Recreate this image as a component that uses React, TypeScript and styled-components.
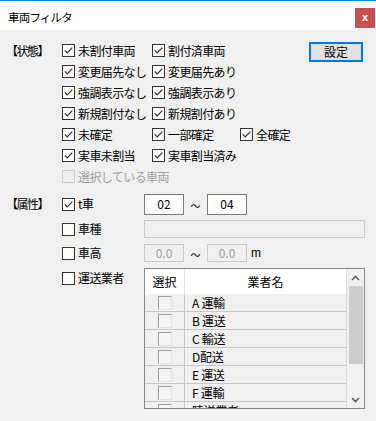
import { FC } from 'react';
import styled, { createGlobalStyle } from 'styled-components';

const GlobalStyle = createGlobalStyle`
  html, body {
    margin: 0;
    padding: 0;
    background: #f0f0f0;
  }
  body {
    font-family: "Noto Sans CJK JP", "Noto Sans", sans-serif;
    font-size: 12px;
    color: #000;
  }
`;

const stateRows: { label: string; checked: boolean; col: number; row: number; disabled?: boolean }[] = [
  { label: '未割付車両', checked: true, col: 2, row: 1 },
  { label: '割付済車両', checked: true, col: 3, row: 1 },
  { label: '変更届先なし', checked: true, col: 2, row: 2 },
  { label: '変更届先あり', checked: true, col: 3, row: 2 },
  { label: '強調表示なし', checked: true, col: 2, row: 3 },
  { label: '強調表示あり', checked: true, col: 3, row: 3 },
  { label: '新規割付なし', checked: true, col: 2, row: 4 },
  { label: '新規割付あり', checked: true, col: 3, row: 4 },
  { label: '未確定', checked: true, col: 2, row: 5 },
  { label: '一部確定', checked: true, col: 3, row: 5 },
  { label: '全確定', checked: true, col: 4, row: 5 },
  { label: '実車未割当', checked: true, col: 2, row: 6 },
  { label: '実車割当済み', checked: true, col: 3, row: 6 },
  { label: '選択している車両', checked: false, col: 2, row: 7, disabled: true },
];

const carriers = ['A 運輸', 'B 運送', 'C 輸送', 'D配送', 'E 運送', 'F 運輸', '陸送業者'];

const CheckMark = () => (
  <svg width="11" height="11" viewBox="0 0 11 11">
    <path d="M1.8 5.4 L4.2 7.9 L9.3 2.6" fill="none" stroke="#333" strokeWidth="1.3" />
  </svg>
);

const Check: FC<{ label: string; checked?: boolean; disabled?: boolean; col?: number; row?: number }> = ({
  label,
  checked,
  disabled,
  col,
  row,
}) => (
  <CheckLabel $col={col} $row={row} $disabled={disabled}>
    <Box $disabled={disabled}>{checked ? <CheckMark /> : null}</Box>
    <span>{label}</span>
  </CheckLabel>
);

const Chevron: FC<{ down?: boolean }> = ({ down }) => (
  <svg width="9" height="6" viewBox="0 0 9 6">
    <path
      d={down ? 'M1 1 L4.5 4.5 L8 1' : 'M1 5 L4.5 1.5 L8 5'}
      fill="none"
      stroke="#606060"
      strokeWidth="1.6"
    />
  </svg>
);

const App = () => {
  return (
    <Window>
      <GlobalStyle />
      <TitleBar>
        <Title>車両フィルタ</Title>
        <CloseButton>x</CloseButton>
      </TitleBar>
      <Body>
        <StateGrid>
          <SectionLabel>【状態】</SectionLabel>
          {stateRows.map((r) => (
            <Check key={r.label} {...r} />
          ))}
          <SetButton>設定</SetButton>
        </StateGrid>

        <AttrGrid>
          <SectionLabel>【属性】</SectionLabel>
          <Check label="t車" checked col={2} row={1} />
          <FieldRow>
            <Field $width={40}>02</Field>
            <Tilde>～</Tilde>
            <Field $width={40}>04</Field>
          </FieldRow>

          <Check label="車種" col={2} row={2} />
          <FieldRow>
            <Field $width={221} $disabled />
          </FieldRow>

          <Check label="車高" col={2} row={3} />
          <FieldRow>
            <Field $width={40} $disabled>
              0.0
            </Field>
            <Tilde>～</Tilde>
            <Field $width={40} $disabled>
              0.0
            </Field>
            <Unit>m</Unit>
          </FieldRow>

          <CarrierCheck>
            <Check label="運送業者" />
          </CarrierCheck>
          <ListBox>
            <ListArea>
              <HeadRow>
                <HeadCell $first>選択</HeadCell>
                <HeadCell>業者名</HeadCell>
              </HeadRow>
              {carriers.map((c) => (
                <ItemRow key={c}>
                  <SelectCell>
                    <SmallBox />
                  </SelectCell>
                  <NameCell>{c}</NameCell>
                </ItemRow>
              ))}
            </ListArea>
            <ScrollBar>
              <ScrollArrow>
                <Chevron />
              </ScrollArrow>
              <Track>
                <Thumb />
              </Track>
              <ScrollArrow>
                <Chevron down />
              </ScrollArrow>
            </ScrollBar>
          </ListBox>
        </AttrGrid>
      </Body>
    </Window>
  );
};

const Window = styled.div`
  width: 376px;
  height: 421px;
  overflow: hidden;
  background: #f0f0f0;
  display: flex;
  flex-direction: column;
`;

const TitleBar = styled.div`
  height: 29px;
  border-top: 1px solid #1883d7;
  background: #fff;
  display: flex;
  align-items: flex-start;
  justify-content: space-between;
  padding-left: 8px;
`;

const Title = styled.div`
  font-size: 11.5px;
  letter-spacing: -0.8px;
  line-height: 14px;
  margin-top: 9px;
`;

const CloseButton = styled.div`
  width: 20px;
  height: 20px;
  margin-top: 7px;
  margin-right: 1px;
  background: #c75050;
  color: #fff;
  font-family: 'Liberation Sans', sans-serif;
  font-weight: bold;
  font-size: 11px;
  line-height: 18px;
  text-align: center;
`;

const Body = styled.div`
  flex: 1;
  padding: 10px 0 0 8px;
`;

const StateGrid = styled.div`
  display: grid;
  grid-template-columns: 54px 90px 88px 1fr;
  grid-auto-rows: 21px;
`;

const SectionLabel = styled.div`
  grid-column: 1;
  grid-row: 1;
  align-self: center;
  letter-spacing: -1.5px;
  margin-left: -2px;
  line-height: 14px;
`;

const CheckLabel = styled.label<{ $col?: number; $row?: number; $disabled?: boolean }>`
  grid-column: ${({ $col }) => $col ?? 'auto'};
  grid-row: ${({ $row }) => $row ?? 'auto'};
  display: flex;
  align-items: center;
  gap: 3px;
  line-height: 14px;
  letter-spacing: -0.6px;
  white-space: nowrap;
  color: ${({ $disabled }) => ($disabled ? '#a0a0a0' : '#000')};
`;

const Box = styled.span<{ $disabled?: boolean }>`
  box-sizing: border-box;
  width: 13px;
  height: 13px;
  flex: none;
  display: flex;
  align-items: center;
  justify-content: center;
  background: ${({ $disabled }) => ($disabled ? '#f0f0f0' : '#fff')};
  border: 1px solid ${({ $disabled }) => ($disabled ? '#cccccc' : '#333')};
`;

const SetButton = styled.div`
  grid-column: 4;
  grid-row: 1;
  justify-self: end;
  align-self: start;
  margin: 2px 13px 0 0;
  box-sizing: border-box;
  width: 54px;
  height: 20px;
  border: 2px solid #0078d7;
  background: #e1e1e1;
  text-align: center;
  line-height: 16px;
`;

const AttrGrid = styled.div`
  display: grid;
  grid-template-columns: 54px 82px 1fr;
  grid-template-rows: 22px 22px 20px auto;
  row-gap: 3px;
  margin-top: 6px;
`;

const FieldRow = styled.div`
  grid-column: 3;
  display: flex;
  align-items: center;
`;

const Field = styled.div<{ $width: number; $disabled?: boolean }>`
  box-sizing: border-box;
  width: ${({ $width }) => $width}px;
  height: ${({ $disabled }) => ($disabled ? 18 : 21)}px;
  border: 1px solid ${({ $disabled }) => ($disabled ? '#cccccc' : '#7a7a7a')};
  background: ${({ $disabled }) => ($disabled ? '#f0f0f0' : '#fff')};
  color: ${({ $disabled }) => ($disabled ? '#a0a0a0' : '#000')};
  text-align: center;
  line-height: ${({ $disabled }) => ($disabled ? 16 : 18)}px;
`;

const Tilde = styled.span`
  width: 23px;
  text-align: center;
  font-size: 10px;
  padding-top: 3px;
`;

const Unit = styled.span`
  margin-left: 4px;
  font-family: 'Liberation Sans', sans-serif;
`;

const CarrierCheck = styled.div`
  grid-column: 2;
  grid-row: 4;
  padding-top: 1px;
  margin-top: 4px;
`;

const ListBox = styled.div`
  grid-column: 3;
  grid-row: 4;
  margin-top: 2px;
  box-sizing: border-box;
  width: 221px;
  height: 141px;
  border: 1px solid #828790;
  display: flex;
  overflow: hidden;
`;

const ListArea = styled.div`
  flex: 1;
  overflow: hidden;
  border-right: 1px solid #d9d9d9;
`;

const HeadRow = styled.div`
  display: grid;
  grid-template-columns: 40px 1fr;
  height: 25px;
  background: #fff;
`;

const HeadCell = styled.div<{ $first?: boolean }>`
  display: flex;
  align-items: center;
  justify-content: center;
  border-right: ${({ $first }) => ($first ? '1px solid #e5e5e5' : 'none')};
`;

const ItemRow = styled.div`
  display: grid;
  grid-template-columns: 40px 1fr;
  height: 17px;
  border-bottom: 1px solid #c8c8c8;
  background: #f0f0f0;
`;

const SelectCell = styled.div`
  display: flex;
  align-items: center;
  justify-content: center;
  border-right: 1px solid #c8c8c8;
`;

const SmallBox = styled.span`
  box-sizing: border-box;
  width: 14px;
  height: 14px;
  border: 1px solid #a0a0a0;
  border-right-color: #e3e3e3;
  border-bottom-color: #e3e3e3;
  background: #f4f4f4;
`;

const NameCell = styled.div`
  padding-left: 7px;
  line-height: 17px;
  letter-spacing: -0.3px;
  white-space: nowrap;
`;

const ScrollBar = styled.div`
  width: 17px;
  display: flex;
  flex-direction: column;
  background: #f0f0f0;
`;

const ScrollArrow = styled.div`
  height: 17px;
  display: flex;
  align-items: center;
  justify-content: center;
`;

const Track = styled.div`
  flex: 1;
  padding: 0 1px 0 2px;
`;

const Thumb = styled.div`
  height: 78px;
  background: #cdcdcd;
`;

export default App;
